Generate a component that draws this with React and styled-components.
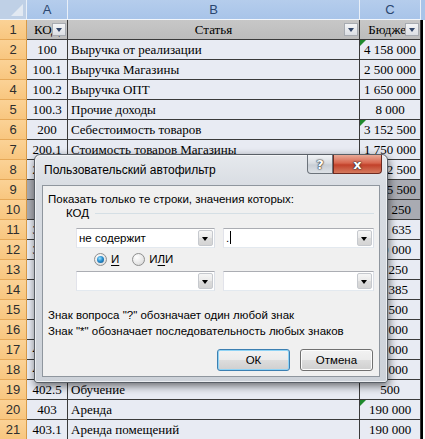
import React from 'react';
import styled, { createGlobalStyle } from 'styled-components';

const GlobalStyle = createGlobalStyle`
  html, body {
    margin: 0;
    padding: 0;
    background: #ffffff;
  }
`;

const Screen = styled.div`
  position: relative;
  width: 425px;
  height: 439px;
  overflow: hidden;
  background: #ffffff;
`;

const Sheet = styled.div`
  display: grid;
  grid-template-columns: 27px 41px 292px 61px 4px;
  grid-auto-rows: 20px;
`;

const Corner = styled.div`
  position: relative;
  box-sizing: border-box;
  background: #bfd0e6;
  border-right: 1px solid #e8eff8;
  border-bottom: 1px solid #f2f6fb;
  &::after {
    content: '';
    position: absolute;
    right: 3px;
    bottom: 3px;
    border-left: 12px solid transparent;
    border-bottom: 12px solid #e2e9f2;
  }
`;

const ColHead = styled.div`
  box-sizing: border-box;
  background: linear-gradient(180deg, #b5cdec 0%, #a8c4e9 100%);
  border-right: 1px solid #e8eff8;
  border-bottom: 1px solid #f2f6fb;
  color: #2a466f;
  font: 13px/19px "Liberation Sans", Arial, sans-serif;
  text-align: center;
`;

const RowHead = styled.div`
  box-sizing: border-box;
  background: linear-gradient(180deg, #fbd296 0%, #f8c67f 100%);
  border-right: 1px solid #d79a48;
  border-bottom: 1px solid #e6a857;
  color: #2e2e2e;
  font: 13px/19px "Liberation Sans", Arial, sans-serif;
  text-align: center;
`;

const Cell = styled.div`
  position: relative;
  box-sizing: border-box;
  background: ${p => (p.$shade ? '#a9abb2' : '#e8ebf3')};
  border-right: 1px solid #3a3a3a;
  border-bottom: 1px solid #3a3a3a;
  padding: 0 3px;
  color: #000;
  font: 13px/19px "Liberation Serif", "Times New Roman", serif;
  text-align: ${p => p.$align || 'left'};
  white-space: nowrap;
  overflow: hidden;
`;

const HeadCell = styled(Cell)`
  background: linear-gradient(180deg, #c7c7c7 0%, #bcbcbc 100%);
  text-align: center;
  padding: 0;
`;

const Edge = styled.div`
  box-sizing: border-box;
  border-left: 2px solid #000;
  background: #ffffff;
`;

const EdgeHead = styled.div`
  background: #a8c4e9;
`;

const FilterButton = styled.span`
  position: absolute;
  right: 1px;
  top: 3px;
  width: 14px;
  height: 13px;
  box-sizing: border-box;
  border: 1px solid #a7abb1;
  background: linear-gradient(180deg, #f4f5f7 0%, #dcdfe4 100%);
  &::after {
    content: '';
    position: absolute;
    left: 3px;
    top: 4px;
    border-left: 3.5px solid transparent;
    border-right: 3.5px solid transparent;
    border-top: 4px solid #33476a;
  }
`;

const Note = styled.span`
  position: absolute;
  left: 0;
  top: 0;
  border-top: 6px solid #1f8a2d;
  border-right: 6px solid transparent;
`;

/* dialog */

const Dialog = styled.div`
  position: absolute;
  left: 34px;
  top: 154px;
  width: 354px;
  height: 229px;
  box-sizing: border-box;
  display: flex;
  flex-direction: column;
  border: 1px solid #595f66;
  border-radius: 6px 6px 3px 3px;
  background: linear-gradient(180deg, #e6e9ed 0%, #d9dde3 30px, #cdd2d9 100%);
  box-shadow: inset 0 0 0 1px rgba(255, 255, 255, 0.6), 1px 3px 9px rgba(0, 0, 0, 0.55);
  font: 11.5px/14px "Liberation Sans", Tahoma, sans-serif;
  color: #000;
`;

const TitleBar = styled.div`
  display: flex;
  align-items: flex-start;
  height: 30px;
  padding: 0 5px 0 9px;
`;

const Title = styled.span`
  align-self: center;
  font-size: 12px;
`;

const CaptionButtons = styled.div`
  margin-left: auto;
  display: flex;
  height: 19px;
`;

const CaptionButton = styled.span`
  box-sizing: border-box;
  width: ${p => p.$w}px;
  height: 19px;
  display: flex;
  align-items: center;
  justify-content: center;
  border: 1px solid ${p => (p.$red ? '#6e2a20' : '#6c737b')};
  border-top: none;
  border-radius: ${p => (p.$red ? '0 0 4px 0' : '0 0 0 4px')};
  background: ${p =>
    p.$red
      ? 'linear-gradient(180deg, #e9a996 0%, #d7654d 45%, #c2412a 55%, #d57a5e 100%)'
      : 'linear-gradient(180deg, #f1f3f5 0%, #d9dde2 45%, #c8ced5 55%, #dde1e6 100%)'};
  color: #ffffff;
  font: bold 13px/1 "DejaVu Sans", "Liberation Sans", sans-serif;
  text-shadow: 0 0 1px #2c2c2c, 0 0 1px #2c2c2c, 0 0 2px #333;
`;

const Client = styled.div`
  flex: 1;
  margin: 0 7px 5px;
  box-sizing: border-box;
  display: flex;
  flex-direction: column;
  border: 1px solid #8f969e;
  background: #f0f0f0;
`;

const Prompt = styled.div`
  margin: 6px 0 0 5px;
  height: 14px;
`;

const GroupHead = styled.div`
  display: flex;
  align-items: center;
  height: 14px;
  margin: 0 5px 0 23px;
`;

const GroupRule = styled.span`
  flex: 1;
  height: 1px;
  margin-left: 6px;
  background: #d5dfe5;
`;

const ComboRow = styled.div`
  display: flex;
  gap: 8px;
  margin: ${p => p.$top}px 0 0 33px;
`;

const Combo = styled.div`
  box-sizing: border-box;
  width: ${p => p.$w}px;
  height: 20px;
  display: flex;
  align-items: center;
  border: 1px solid #abadb3;
  border-color: #abadb3 #dbdfe6 #e3e9ef #e2e3ea;
  background: #ffffff;
`;

const ComboText = styled.span`
  flex: 1;
  padding-left: 2px;
  white-space: nowrap;
`;

const Caret = styled.span`
  display: inline-block;
  width: 1px;
  height: 13px;
  margin-left: 1px;
  vertical-align: -2px;
  background: #000;
`;

const ComboArrow = styled.span`
  position: relative;
  box-sizing: border-box;
  width: 15px;
  height: 16px;
  margin-right: 1px;
  border: 1px solid #c6c9ce;
  border-radius: 2px;
  background: linear-gradient(180deg, #f6f6f6 0%, #e9e9e9 50%, #dcdcdc 51%, #d4d4d4 100%);
  &::after {
    content: '';
    position: absolute;
    left: 3px;
    top: 6px;
    border-left: 3.5px solid transparent;
    border-right: 3.5px solid transparent;
    border-top: 4px solid #000;
  }
`;

const RadioRow = styled.div`
  display: flex;
  align-items: center;
  height: 14px;
  margin: 4px 0 0 51px;
`;

const RadioOption = styled.label`
  display: flex;
  align-items: center;
  gap: 4px;
  margin-right: 13px;
`;

const RadioDot = styled.span`
  position: relative;
  box-sizing: border-box;
  width: 13px;
  height: 13px;
  border-radius: 50%;
  border: 1px solid #8e8f8f;
  background: radial-gradient(circle at 35% 30%, #ffffff 0%, #e6e6e6 60%, #cfcfcf 100%);
  &::after {
    content: '';
    display: ${p => (p.$on ? 'block' : 'none')};
    position: absolute;
    left: 2px;
    top: 2px;
    width: 7px;
    height: 7px;
    border-radius: 50%;
    background: radial-gradient(circle at 40% 35%, #9de3ff 0%, #2a8fcf 45%, #0d4f86 100%);
  }
`;

const Key = styled.u`
  text-underline-offset: 2px;
`;

const Hints = styled.div`
  margin: 16px 0 0 5px;
  line-height: 16px;
`;

const ButtonRow = styled.div`
  display: flex;
  justify-content: flex-end;
  gap: 10px;
  margin: 10px 6px 0 0;
`;

const PushButton = styled.button`
  box-sizing: border-box;
  width: 73px;
  height: 22px;
  padding: 0;
  border: 1px solid ${p => (p.$primary ? '#3c7fb1' : '#707070')};
  border-radius: 3px;
  background: linear-gradient(180deg, #f2f2f2 0%, #ebebeb 50%, #dddddd 51%, #cfcfcf 100%);
  box-shadow: ${p => (p.$primary ? 'inset 0 0 0 1px #8fd3f5' : 'inset 0 0 0 1px #fcfcfc')};
  font: 11.5px "Liberation Sans", Tahoma, sans-serif;
  color: #000;
`;

const rows = [
  { code: 'КОД', name: 'Статья', sum: 'Бюджет', head: true },
  { code: '100', name: 'Выручка от реализации', sum: '4 158 000', note: true },
  { code: '100.1', name: 'Выручка Магазины', sum: '2 500 000' },
  { code: '100.2', name: 'Выручка ОПТ', sum: '1 650 000' },
  { code: '100.3', name: 'Прочие доходы', sum: '8 000' },
  { code: '200', name: 'Себестоимость товаров', sum: '3 152 500', note: true },
  { code: '200.1', name: 'Стоимость товаров Магазины', sum: '1 750 000' },
  { code: '200.2', name: 'Стоимость товаров ОПТ', sum: '1 402 500' },
  { code: '300', name: 'Операционные расходы', sum: '1 065 500', shade: true },
  { code: '301', name: 'Расходы на персонал', sum: '112 250', shade: true },
  { code: '301.1', name: 'Заработная плата', sum: '131 635' },
  { code: '301.2', name: 'Премии', sum: '120 000' },
  { code: '302', name: 'Налоги с ФОТ', sum: '36 250' },
  { code: '400', name: 'Административные расходы', sum: '23 385' },
  { code: '401', name: 'Связь', sum: '12 500' },
  { code: '402', name: 'Канцтовары', sum: '10 000' },
  { code: '402.1', name: 'Транспорт', sum: '18 000' },
  { code: '402.4', name: 'Командировки', sum: '24 000' },
  { code: '402.5', name: 'Обучение', sum: '500' },
  { code: '403', name: 'Аренда', sum: '190 000', note: true },
  { code: '403.1', name: 'Аренда помещений', sum: '190 000' },
];

function HeaderRow({ row, n }) {
  return (
    <>
      <RowHead>{n}</RowHead>
      <HeadCell>{row.code}<FilterButton /></HeadCell>
      <HeadCell>{row.name}<FilterButton /></HeadCell>
      <HeadCell>{row.sum}<FilterButton /></HeadCell>
      <Edge />
    </>
  );
}

function DataRow({ row, n }) {
  return (
    <>
      <RowHead>{n}</RowHead>
      <Cell $align="center" $shade={row.shade}>{row.code}</Cell>
      <Cell $shade={row.shade}>{row.name}</Cell>
      <Cell $align="center" $shade={row.shade}>
        {row.note && <Note />}
        {row.sum}
      </Cell>
      <Edge />
    </>
  );
}

function FilterDialog() {
  return (
    <Dialog>
      <TitleBar>
        <Title>Пользовательский автофильтр</Title>
        <CaptionButtons>
          <CaptionButton $w={26}>?</CaptionButton>
          <CaptionButton $w={49} $red>x</CaptionButton>
        </CaptionButtons>
      </TitleBar>
      <Client>
        <Prompt>Показать только те строки, значения которых:</Prompt>
        <GroupHead>
          КОД
          <GroupRule />
        </GroupHead>
        <ComboRow $top={8}>
          <Combo $w={139}>
            <ComboText>не содержит</ComboText>
            <ComboArrow />
          </Combo>
          <Combo $w={151}>
            <ComboText>.<Caret /></ComboText>
            <ComboArrow />
          </Combo>
        </ComboRow>
        <RadioRow>
          <RadioOption>
            <RadioDot $on />
            <Key>И</Key>
          </RadioOption>
          <RadioOption>
            <RadioDot />
            <span>И<Key>Л</Key>И</span>
          </RadioOption>
        </RadioRow>
        <ComboRow $top={5}>
          <Combo $w={139}>
            <ComboText />
            <ComboArrow />
          </Combo>
          <Combo $w={151}>
            <ComboText />
            <ComboArrow />
          </Combo>
        </ComboRow>
        <Hints>
          <div>Знак вопроса "?" обозначает один любой знак</div>
          <div>Знак "*" обозначает последовательность любых знаков</div>
        </Hints>
        <ButtonRow>
          <PushButton $primary>ОК</PushButton>
          <PushButton>Отмена</PushButton>
        </ButtonRow>
      </Client>
    </Dialog>
  );
}

export default function App() {
  return (
    <Screen>
      <GlobalStyle />
      <Sheet>
        <Corner />
        <ColHead>A</ColHead>
        <ColHead>B</ColHead>
        <ColHead>C</ColHead>
        <EdgeHead />
        {rows.map((row, i) =>
          row.head
            ? <HeaderRow key={i} row={row} n={i + 1} />
            : <DataRow key={i} row={row} n={i + 1} />
        )}
      </Sheet>
      <FilterDialog />
    </Screen>
  );
}
